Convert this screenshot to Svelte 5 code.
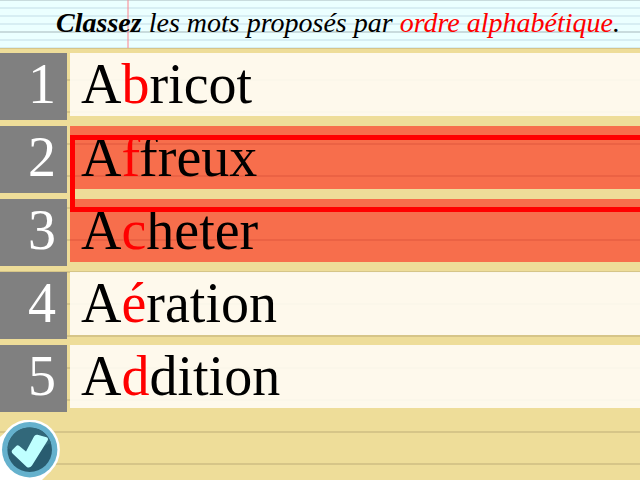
<script>
  const words = [
    { start: 'A', key: 'b', rest: 'ricot' },
    { start: 'A', key: 'f', rest: 'freux', wrong: true, target: true },
    { start: 'A', key: 'c', rest: 'heter', wrong: true },
    { start: 'A', key: 'é', rest: 'ration' },
    { start: 'A', key: 'd', rest: 'dition' }
  ];
</script>

<div class="page">
  <header>
    <p><strong>Classez</strong> les mots proposés par <span class="key">ordre alphabétique</span>.</p>
  </header>

  <ol>
    {#each words as word, i}
      <li>
        <span class="number">{i + 1}</span>
        <div class="word" class:wrong={word.wrong}>
          {word.start}<span class="key">{word.key}</span>{word.rest}
        </div>
        {#if word.target}<div class="target"></div>{/if}
      </li>
    {/each}
  </ol>

  <button type="button" aria-label="Valider">
    <svg viewBox="0 0 60 60" width="60" height="60" aria-hidden="true">
      <path d="M0 17 L9 9 L51 51 L42 60 H0 Z" fill="#fff" />
      <circle cx="29.7" cy="29.7" r="30.2" fill="#fff" />
      <circle cx="29.7" cy="29.7" r="27.7" fill="#65b1cd" />
      <circle cx="29.7" cy="29.7" r="22.3" fill="#295c70" />
      <path d="M7.5 28 A22.300 22.300 0 0 1 51 23 Q42 27 35 30 Q20 35 7.500 28Z" fill="#32687a" />
      <path d="M12.300 30 L16.500 25.800 Q17.700 24.600 19 25.800 L26 31.500 L34 16.500 Q35 14.300 37.500 14.700 L46.500 17.200 Q48.800 18 47.600 20.500 L32 45.500 Q29.500 49 26.500 46.700 L12.800 33.800 Q10.800 31.500 12.300 30Z" fill="#bfffff" />
    </svg>
  </button>
</div>

<style>
  :global(body) {
    margin: 0;
  }

  .page {
    position: relative;
    min-height: 100vh;
    box-sizing: border-box;
    overflow: hidden;
    font-family: 'Liberation Serif', 'Times New Roman', serif;
    background: repeating-linear-gradient(
      #eedd99 0 15px,
      #d6c588 15px 17px,
      #eedd99 17px 32px
    );
  }

  header {
    height: 48px;
    box-sizing: border-box;
    padding: 0 20px;
    text-align: right;
    background:
      linear-gradient(rgba(255, 130, 140, 0.5), rgba(255, 130, 140, 0.5)) 127px 0 / 2px 100% no-repeat,
      repeating-linear-gradient(#c8dbdd 0 1px, transparent 1px 31px, #c8dbdd 31px 32px),
      repeating-linear-gradient(#d7eef3 0 1px, #ebffff 1px 7px, #d7eef3 7px 8px);
  }

  header p {
    margin: 0;
    font-size: 28px;
    line-height: 46px;
    font-style: italic;
    white-space: nowrap;
  }

  ol {
    display: flex;
    flex-direction: column;
    gap: 6px;
    margin: 0;
    padding: 5px 0 0;
    list-style: none;
  }

  li {
    position: relative;
    display: flex;
    align-items: flex-start;
    gap: 3px;
    font-size: 56px;
    line-height: 63px;
  }

  .number {
    width: 67px;
    height: 67px;
    box-sizing: border-box;
    padding-right: 11px;
    text-align: right;
    color: #fff;
    background: #808080;
  }

  .word {
    flex: 1;
    padding-left: 11px;
    background: rgba(255, 252, 245, 0.9);
  }

  .wrong {
    background: rgba(255, 0, 0, 0.5);
  }

  .key {
    color: #f00;
  }

  .target {
    position: absolute;
    z-index: 1;
    top: 9px;
    left: 70px;
    right: -5px;
    height: 67px;
    border: 5px solid #f00;
  }

  button {
    position: absolute;
    left: 0;
    bottom: 0;
    padding: 0;
    border: 0;
    background: none;
    cursor: pointer;
  }

  svg {
    display: block;
  }
</style>
